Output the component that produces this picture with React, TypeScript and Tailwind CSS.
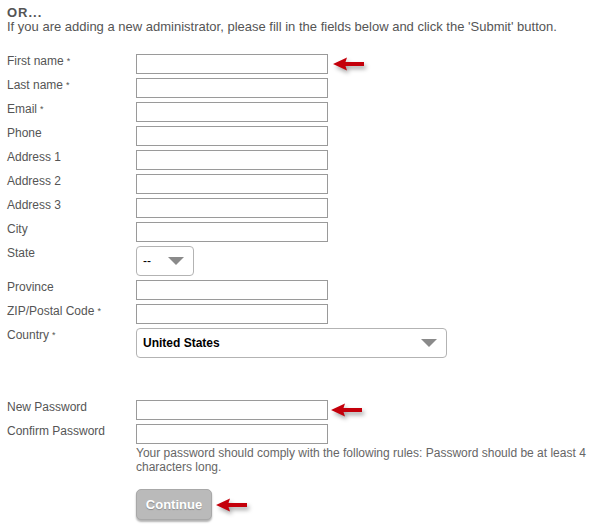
import React from "react";

type Field = { label: string; required?: boolean; kind?: "text" | "state" | "country"; arrow?: boolean };

const fields: Field[] = [
  { label: "First name", required: true, arrow: true },
  { label: "Last name", required: true },
  { label: "Email", required: true },
  { label: "Phone" },
  { label: "Address 1" },
  { label: "Address 2" },
  { label: "Address 3" },
  { label: "City" },
  { label: "State", kind: "state" },
  { label: "Province" },
  { label: "ZIP/Postal Code", required: true },
  { label: "Country", required: true, kind: "country" },
];

function Arrow() {
  return (
    <svg
      width="34"
      height="14"
      viewBox="0 0 34 14"
      className="shrink-0 drop-shadow-[2px_3px_2px_rgba(0,0,0,0.35)]"
    >
      <path d="M0 7 L14 0.5 L12.5 5 L31 5 L31 9 L12.5 9 L14 13.5 Z" fill="#c4000b" />
    </svg>
  );
}

function Caret() {
  return (
    <svg width="16" height="8" viewBox="0 0 16 8">
      <path d="M0 0 H16 L8 8 Z" fill="#8a8a8a" />
    </svg>
  );
}

function Label({ text, required }: { text: string; required?: boolean }) {
  return (
    <div className="text-[12px] leading-[14px] text-[#555]">
      {text}
      {required && <span className="ml-[3px] text-[9px] align-[1px]">*</span>}
    </div>
  );
}

const inputCls = "block w-[192px] h-[20px] border border-[#9a9a9a] bg-white outline-none";

function Control({ field }: { field: Field }) {
  if (field.kind === "state") {
    return (
      <div className="w-[58px] h-[30px] border border-[#b3b3b3] rounded-[4px] flex items-center justify-between pl-[6px] pr-[9px]">
        <span className="text-[12px] text-black">--</span>
        <Caret />
      </div>
    );
  }
  if (field.kind === "country") {
    return (
      <div className="w-[311px] h-[30px] border border-[#b3b3b3] rounded-[4px] flex items-center justify-between pl-[6px] pr-[9px]">
        <span className="text-[12px] font-bold text-black">United States</span>
        <Caret />
      </div>
    );
  }
  return (
    <div className="flex items-center gap-[5px]">
      <input className={inputCls} />
      {field.arrow && <Arrow />}
    </div>
  );
}

export default function App() {
  return (
    <div className="w-[596px] h-[524px] bg-white pl-[7px] pt-[5px] font-['Liberation_Sans',Arial,sans-serif] text-[#555]">
      <div className="text-[13px] font-bold leading-[15px] tracking-[1px]">OR...</div>
      <p className="text-[13px] leading-[14px]">
        If you are adding a new administrator, please fill in the fields below and click the 'Submit' button.
      </p>

      <div className="mt-[20px] grid grid-cols-[129px_1fr] gap-y-[4px]">
        {fields.map((f) => (
          <React.Fragment key={f.label}>
            <Label text={f.label} required={f.required} />
            <Control field={f} />
          </React.Fragment>
        ))}
      </div>

      <div className="mt-[42px] grid grid-cols-[129px_1fr] gap-y-[4px]">
        <Label text="New Password" />
        <div className="flex items-center gap-[3px]">
          <input type="password" className={inputCls} />
          <Arrow />
        </div>
        <Label text="Confirm Password" />
        <div>
          <input type="password" className={inputCls} />
          <p className="mt-[2px] text-[12px] leading-[14px] text-[#666]">
            Your password should comply with the following rules: Password should be at least 4 characters long.
          </p>
          <div className="mt-[15px] flex items-center gap-[4px]">
            <button className="w-[76px] h-[31px] rounded-[5px] border border-[#a8a8a8] bg-[#bababa] text-white font-bold text-[13px] shadow-[0_2px_2px_rgba(0,0,0,0.3)] text-shadow-[0_1px_1px_rgba(0,0,0,0.25)]">
              Continue
            </button>
            <Arrow />
          </div>
        </div>
      </div>
    </div>
  );
}
